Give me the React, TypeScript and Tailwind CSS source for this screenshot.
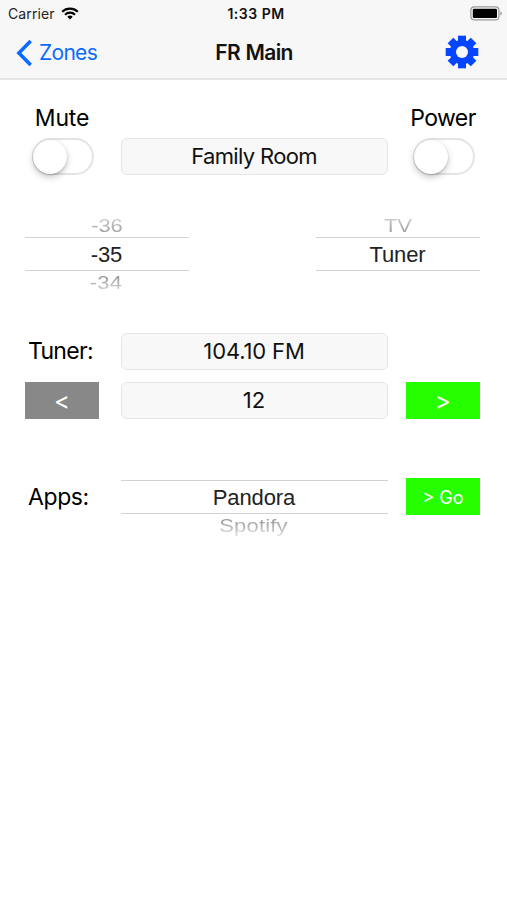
import React from 'react';
import clsx from 'clsx';

interface SwitchProps {
  label: string;
  className?: string;
}

const ToggleField: React.FC<SwitchProps> = ({ label, className }) => (
  <div className={clsx('flex w-[74px] flex-col items-center', className)}>
    <span className="whitespace-nowrap text-[23px] leading-[28px]">{label}</span>
    <button
      role="switch"
      aria-checked={false}
      aria-label={label}
      className="ml-[2px] mt-[6px] flex h-[37px] w-[62px] items-center rounded-full border-2 border-[#e4e4e4] bg-white"
    >
      <span className="-ml-px h-[34px] w-[34px] rounded-full bg-white shadow-[0_3px_7px_rgba(0,0,0,0.22),0_1px_2px_rgba(0,0,0,0.18)]" />
    </button>
  </div>
);

interface ValueBoxProps {
  value: string;
  className?: string;
}

const ValueBox: React.FC<ValueBoxProps> = ({ value, className }) => (
  <div
    className={clsx(
      'flex h-[37px] w-[267px] items-center justify-center rounded-[6px] border border-[#e6e6e6] bg-[#f8f8f8] pb-[2px] pr-px text-[22px] leading-none text-[#111]',
      className
    )}
  >
    {value}
  </div>
);

interface PickerProps {
  selected: string;
  before?: string;
  after?: string;
}

const Picker: React.FC<PickerProps> = ({ selected, before, after }) => (
  <div className="flex flex-col text-center font-['Liberation_Sans',Arial,sans-serif] text-[22px] tracking-[-0.1px] text-[#222]">
    <div className="h-[22px] overflow-hidden">
      <span className="block origin-center scale-y-[0.87] bg-gradient-to-b from-[#d6d6d6] to-[#919191] bg-clip-text text-[22px] leading-[22px] text-transparent">
        {before}
      </span>
    </div>
    <div className="h-[34px] border-y border-[#d2d2d2] pr-px leading-[33px]">{selected}</div>
    <div className="h-[24px] overflow-hidden">
      <span className="block origin-center scale-y-[0.87] bg-gradient-to-b from-[#999] from-20% to-[#e2e2e2] bg-clip-text pr-[2px] text-[22px] leading-[24px] tracking-[0.2px] text-transparent">
        {after}
      </span>
    </div>
  </div>
);

const WifiIcon = () => (
  <svg width="18" height="13" viewBox="0 0 18 13" fill="none" stroke="#000" strokeWidth="2.2">
    <path d="M1.2 4.8a11.2 11.2 0 0 1 15.6 0" />
    <path d="M4 7.7a7.2 7.2 0 0 1 10 0" />
    <path d="M9 12.5 6.3 9.8a3.8 3.8 0 0 1 5.4 0Z" fill="#000" stroke="none" />
  </svg>
);

const BatteryIcon = () => (
  <svg width="33" height="15" viewBox="0 0 33 15">
    <rect x="0.9" y="0.9" width="28" height="13" rx="3.5" fill="#f8f8f8" stroke="#999" strokeWidth="1.2" />
    <rect x="2.8" y="2.8" width="24.2" height="9.2" rx="1.3" fill="#000" />
    <path d="M30.4 5.2c1.8.7 1.8 3.7 0 4.4z" fill="#888" />
  </svg>
);

const GearIcon = () => (
  <svg width="34" height="34" viewBox="-17 -17 34 34">
    <g fill="#0645ff">
      <rect x="-4" y="-16.3" width="8" height="32.6" />
      <rect x="-4" y="-16.3" width="8" height="32.6" transform="rotate(45)" />
      <rect x="-4" y="-16.3" width="8" height="32.6" transform="rotate(90)" />
      <rect x="-4" y="-16.3" width="8" height="32.6" transform="rotate(135)" />
      <circle r="12.2" />
    </g>
    <circle r="6" fill="#f7f7f7" />
  </svg>
);

const Header = () => (
  <header className="h-[80px] border-b-2 border-[#e4e4e4] bg-[#f7f7f7]">
    <div className="grid h-[27px] grid-cols-[1fr_auto_1fr] items-center pl-[8px] pr-[4px] text-[14px]">
      <div className="flex items-center gap-[6px] text-[#222]">
        <span className="tracking-[0.1px]">Carrier</span>
        <WifiIcon />
      </div>
      <span className="pl-px text-[14px] font-semibold tracking-[0.5px] text-[#111]">1:33 PM</span>
      <div className="flex justify-end">
        <BatteryIcon />
      </div>
    </div>
    <div className="grid h-[51px] grid-cols-[1fr_auto_1fr] items-center">
      <button className="flex items-center gap-[6px] pl-[16px] text-[21px] tracking-[-0.7px] text-[#0a6cff]">
        <svg width="17" height="28" viewBox="0 0 17 28" fill="none" stroke="currentColor" strokeWidth="3.6">
          <path d="M14.7 2 2.9 14l11.8 12" />
        </svg>
        <span>Zones</span>
      </button>
      <h1 className="pl-px text-[21px] font-semibold tracking-[-0.65px] text-[#111] [word-spacing:1px]">FR Main</h1>
      <button aria-label="Settings" className="flex justify-end pb-[2px] pr-[28px]">
        <GearIcon />
      </button>
    </div>
  </header>
);

const App: React.FC = () => {
  return (
    <div className="min-h-[900px] w-[507px] bg-white font-[Inter,sans-serif] text-black">
      <Header />

      <main className="pl-[25px] pr-[27px] pt-[24px]">
        <section className="grid grid-cols-[96px_267px_92px] items-end">
          <ToggleField label="Mute" className="tracking-[-0.2px]" />
          <ValueBox value="Family Room" className="tracking-[-0.65px]" />
          <ToggleField label="Power" className="justify-self-end tracking-[-0.6px]" />
        </section>

        <section className="mt-[40px] grid grid-cols-[164px_164px] justify-between">
          <Picker before="-36" selected="-35" after="-34" />
          <Picker before="TV" selected="Tuner" />
        </section>

        <section className="mt-[38px] grid grid-cols-[96px_267px_92px] gap-y-[12px]">
          <span className="whitespace-nowrap pl-[3px] text-[23px] leading-[36px] tracking-[-0.7px]">Tuner:</span>
          <ValueBox value="104.10 FM" className="tracking-[-0.15px]" />
          <span />
          <button className="w-[74px] bg-[#888] pt-px text-[24px] leading-none text-white">&lt;</button>
          <ValueBox value="12" />
          <button className="w-[74px] justify-self-end bg-[#26ff00] pt-px text-[24px] leading-none text-white">
            &gt;
          </button>
        </section>

        <section className="mt-[39px] grid grid-cols-[96px_267px_92px]">
          <span className="whitespace-nowrap pl-[3px] pt-[21px] text-[23px] leading-[36px] tracking-[-0.4px]">
            Apps:
          </span>
          <Picker selected="Pandora" after="Spotify" />
          <button className="mt-[20px] h-[37px] w-[74px] justify-self-end bg-[#26ff00] pt-px text-[18px] text-white">
            &gt; Go
          </button>
        </section>
      </main>
    </div>
  );
};

export default App;
